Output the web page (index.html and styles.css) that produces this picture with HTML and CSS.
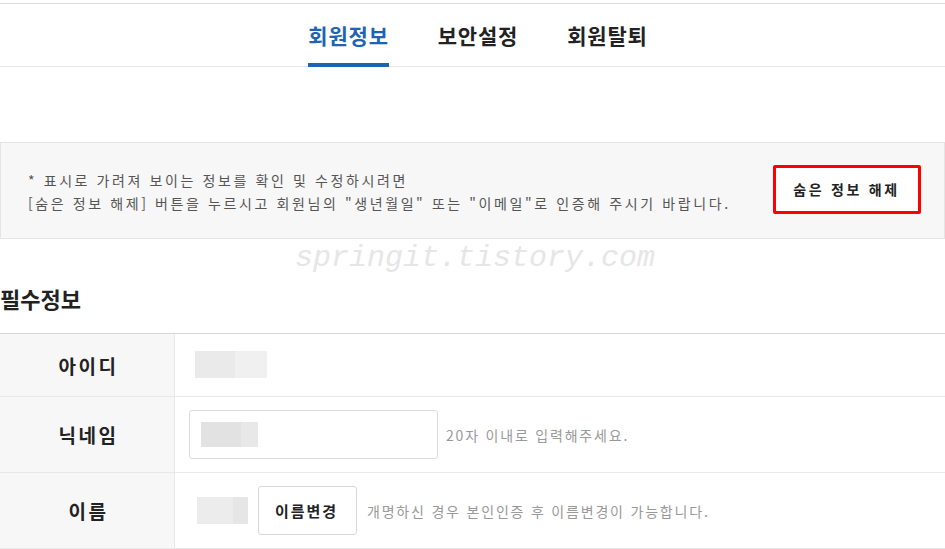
FILE: index.html
```html
<!DOCTYPE html>
<html lang="ko">
<head>
    <meta charset="utf-8">
    <title>회원정보</title>
    <link rel="stylesheet" href="styles.css">
</head>
<body>
    <div class="tabs">
        <a class="tab active">회원정보</a>
        <a class="tab">보안설정</a>
        <a class="tab">회원탈퇴</a>
    </div>

    <div class="notice">
        <p class="notice-text">
            * 표시로 가려져 보이는 정보를 확인 및 수정하시려면<br>
            [숨은 정보 해제] 버튼을 누르시고 회원님의 "생년월일" 또는 "이메일"로 인증해 주시기 바랍니다.
        </p>
        <button class="btn-unhide">숨은 정보 해제</button>
    </div>

    <div class="section">
        <span class="watermark">springit.tistory.com</span>
        <h2 class="section-title">필수정보</h2>

        <div class="info-table">
            <div class="row row-id">
                <div class="label">아이디</div>
                <div class="value">
                    <span class="mask mask-id"></span>
                </div>
            </div>
            <div class="row">
                <div class="label">닉네임</div>
                <div class="value">
                    <div class="input-box"><span class="mask mask-nick"></span></div>
                    <span class="hint">20자 이내로 입력해주세요.</span>
                </div>
            </div>
            <div class="row">
                <div class="label">이름</div>
                <div class="value">
                    <span class="mask mask-name"></span>
                    <button class="btn-small">이름변경</button>
                    <span class="hint">개명하신 경우 본인인증 후 이름변경이 가능합니다.</span>
                </div>
            </div>
        </div>
    </div>
</body>
</html>
```

FILE: styles.css
```css
body {
    margin: 0;
    font-family: "Noto Sans CJK KR", "Noto Sans", sans-serif;
    color: #333;
    background: #fff;
}
.tabs {
    margin-top: 3px;
    border-top: 1px solid #dcdcdc;
    border-bottom: 1px solid #e8e8e8;
    height: 62px;
    display: flex;
    justify-content: center;
    gap: 49px;
    padding-left: 11px;
}
.tab {
    position: relative;
    font-size: 21px;
    font-weight: bold;
    letter-spacing: 0.8px;
    line-height: 62px;
    color: #222;
}
.tab.active {
    color: #1f64b0;
}
.tab.active::after {
    content: "";
    position: absolute;
    left: 0;
    right: 0;
    bottom: -1px;
    height: 4px;
    background: #1f64b0;
}
.notice {
    margin-top: 75px;
    height: 95px;
    background: #f7f7f7;
    border: 1px solid #e5e5e5;
    display: flex;
    align-items: center;
    justify-content: space-between;
    padding: 0 23px 0 27px;
}
.notice-text {
    margin: 0;
    font-size: 14px;
    line-height: 23px;
    letter-spacing: 2.6px;
    color: #555;
    padding-top: 3px;
}
.btn-unhide {
    width: 148px;
    height: 49px;
    border: 3px solid #f00;
    border-radius: 2px;
    background: #fff;
    font-family: inherit;
    font-size: 14px;
    font-weight: bold;
    letter-spacing: 2.7px;
    padding-left: 5px;
    color: #222;
    margin-top: -3px;
}
.section {
    position: relative;
}
.watermark {
    position: absolute;
    left: 295px;
    top: 2px;
    font-family: "Liberation Mono", monospace;
    font-style: italic;
    font-size: 30px;
    color: #e6e6e6;
}
.section-title {
    margin: 0;
    padding-top: 46px;
    font-size: 22px;
    font-weight: bold;
    line-height: 26px;
    color: #222;
}
.info-table {
    margin-top: 22px;
    border-top: 1px solid #d8d8d8;
}
.row {
    display: grid;
    grid-template-columns: 175px 1fr;
    height: 75px;
    border-bottom: 1px solid #e8e8e8;
}
.row-id {
    height: 62px;
}
.label {
    background: #f7f7f7;
    border-right: 1px solid #e8e8e8;
    display: flex;
    align-items: center;
    justify-content: center;
    padding-left: 3px;
    font-size: 19px;
    font-weight: bold;
    letter-spacing: 2.5px;
    color: #222;
}
.value {
    display: flex;
    align-items: center;
    padding-left: 14px;
}
.mask {
    display: inline-block;
    height: 27px;
    background: linear-gradient(to right, #eaeaea 55%, #f0f0f0 55%);
}
.mask-id {
    width: 72px;
    margin-left: 6px;
    margin-top: -1px;
}
.mask-nick {
    width: 57px;
    height: 25px;
    background: linear-gradient(to right, #e2e2e2 70%, #e8e8e8 70%);
}
.mask-name {
    width: 51px;
    margin-left: 8px;
    background: linear-gradient(to right, #ececec 70%, #e6e6e6 70%);
}
.input-box {
    box-sizing: border-box;
    width: 249px;
    height: 49px;
    border: 1px solid #dcdcdc;
    border-radius: 3px;
    display: flex;
    align-items: center;
    padding-left: 11px;
}
.btn-small {
    box-sizing: border-box;
    margin-left: 10px;
    width: 99px;
    height: 49px;
    border: 1px solid #d8d8d8;
    border-radius: 3px;
    background: #fff;
    font-family: inherit;
    font-size: 15px;
    font-weight: bold;
    letter-spacing: 2px;
    padding-left: 4px;
    color: #222;
}
.hint {
    margin-left: 8px;
    font-size: 14px;
    letter-spacing: 1.8px;
    color: #999;
}
.btn-small + .hint {
    margin-left: 10px;
}
```
